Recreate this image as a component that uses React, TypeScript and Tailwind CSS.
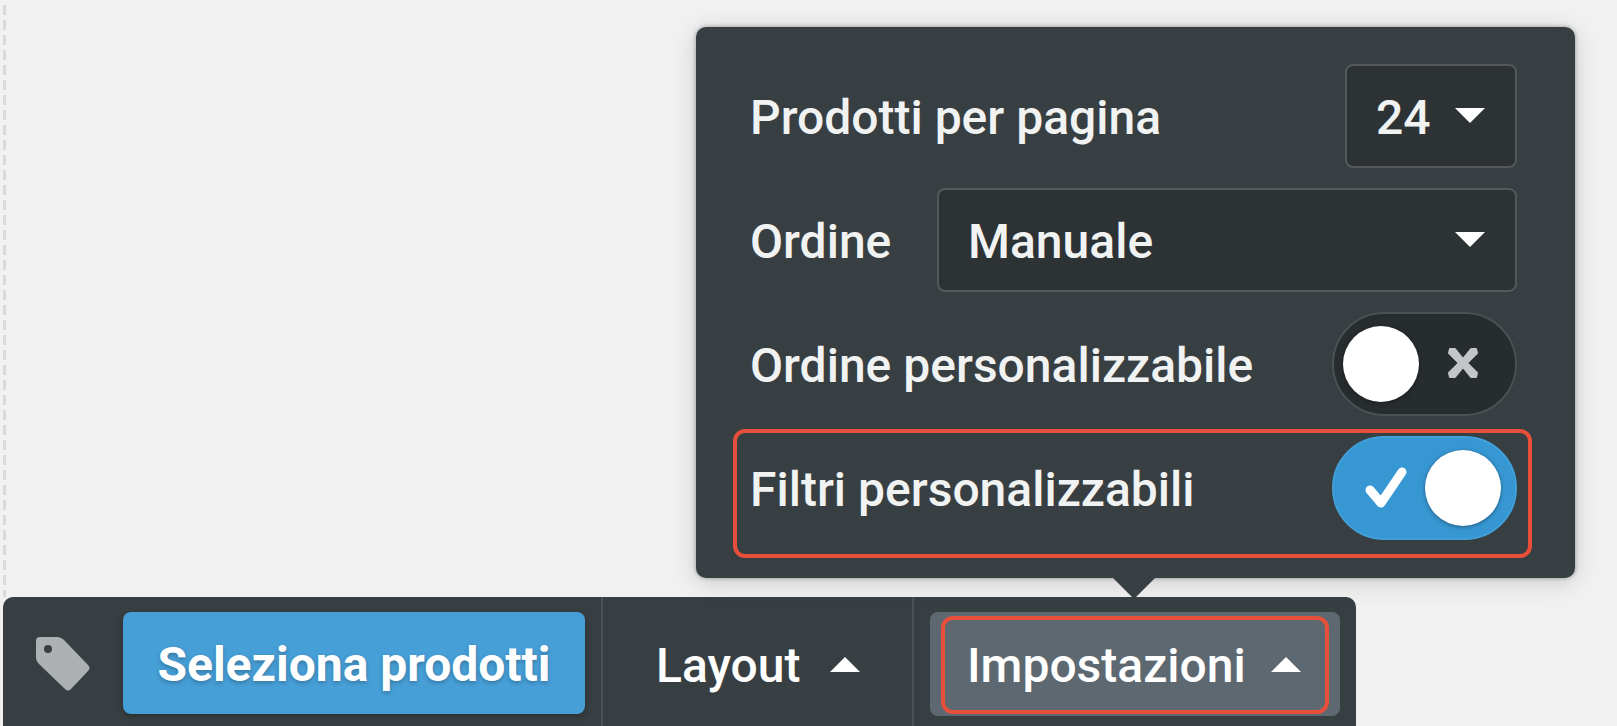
import { useState } from "react";

function Caret({ up = false }: { up?: boolean }) {
  return (
    <svg width="30" height="15" viewBox="0 0 30 15" fill="white" aria-hidden="true">
      <path d={up ? "M0 15L15 0L30 15Z" : "M0 0H30L15 15Z"} />
    </svg>
  );
}

type ToggleProps = {
  id: string;
  checked: boolean;
  onChange: (value: boolean) => void;
};

function Toggle({ id, checked, onChange }: ToggleProps) {
  return (
    <span className="relative block h-[104px] w-[185px] shrink-0">
      <input
        id={id}
        type="checkbox"
        className="peer block h-full w-full cursor-pointer appearance-none rounded-full border-2 border-[#4b5053] bg-[#272c2f] checked:border-[#419fd9] checked:bg-[#3797d3]"
        checked={checked}
        onChange={(e) => onChange(e.target.checked)}
      />
      <span className="pointer-events-none absolute top-[14px] left-[11px] size-[76px] rounded-full bg-white shadow-[0_1px_4px_rgba(0,0,0,0.4)] peer-checked:left-[93px]" />
      {checked ? (
        <svg
          className="pointer-events-none absolute top-[30px] left-[33px]"
          width="42"
          height="44"
          viewBox="0 0 42 44"
          fill="none"
          stroke="white"
          strokeLinecap="round"
          strokeLinejoin="round"
          aria-hidden="true"
        >
          <path d="M5 24L16 37L37 6" strokeWidth="9" />
        </svg>
      ) : (
        <svg
          className="pointer-events-none absolute top-[36px] left-[116px]"
          width="30"
          height="30"
          viewBox="0 0 30 30"
          fill="#c3c5c6"
          stroke="#c3c5c6"
          strokeWidth="2"
          strokeLinejoin="round"
          aria-hidden="true"
        >
          <path d="M2 1H7L15 11L23 1H28L29 5L19 15L29 25L28 29H23L15 19L7 29H2L1 25L11 15L1 5Z" />
        </svg>
      )}
    </span>
  );
}

export default function App() {
  const [perPage, setPerPage] = useState("24");
  const [order, setOrder] = useState("manuale");
  const [customOrder, setCustomOrder] = useState(false);
  const [customFilters, setCustomFilters] = useState(true);

  return (
    <main className="flex min-h-screen flex-col bg-[#f1f1f1] font-['Roboto','Liberation_Sans',sans-serif] text-5xl leading-[56px] text-white">
      {/* CANVAS */}
      <div className="flex">
        {/* dashed edge of the drop area */}
        <div className="ml-[3px] w-[3px] bg-[repeating-linear-gradient(to_bottom,#f1f1f1_0px,#f1f1f1_5px,#dadada_5px,#dadada_15px)]" />

        <div className="flex flex-1 justify-end pt-[27px] pr-[42px] pb-[19px]">
          {/* SETTINGS POPOVER */}
          <section className="relative flex w-[879px] flex-col gap-5 rounded-[10px] bg-[#383f42] pt-[37px] pr-[58px] pb-[38px] pl-[54px] font-medium text-[#f1f2f2] shadow-[0_4px_24px_rgba(0,0,0,0.16),0_0_4px_rgba(0,0,0,0.35)]">
            <div className="flex items-center justify-between">
              <label htmlFor="per-page" className="pt-1">
                Prodotti per pagina
              </label>
              <div className="relative">
                <select
                  id="per-page"
                  className="block h-[104px] w-[172px] appearance-none rounded-[8px] border-2 border-[#54585b] bg-[#2d3235] pt-1 pl-[29px]"
                  value={perPage}
                  onChange={(e) => setPerPage(e.target.value)}
                >
                  <option>24</option>
                  <option>48</option>
                </select>
                <span className="pointer-events-none absolute top-[44px] right-8">
                  <Caret />
                </span>
              </div>
            </div>

            <div className="flex items-center justify-between">
              <label htmlFor="order" className="pt-1">
                Ordine
              </label>
              <div className="relative">
                <select
                  id="order"
                  className="block h-[104px] w-[580px] appearance-none rounded-[8px] border-2 border-[#54585b] bg-[#2d3235] pt-1 pl-[29px]"
                  value={order}
                  onChange={(e) => setOrder(e.target.value)}
                >
                  <option value="manuale">Manuale</option>
                </select>
                <span className="pointer-events-none absolute top-[44px] right-8">
                  <Caret />
                </span>
              </div>
            </div>

            <div className="flex items-center justify-between">
              <label htmlFor="custom-order" className="pt-1">
                Ordine personalizzabile
              </label>
              <Toggle id="custom-order" checked={customOrder} onChange={setCustomOrder} />
            </div>

            <div className="relative flex items-center justify-between">
              <label htmlFor="custom-filters" className="pt-1">
                Filtri personalizzabili
              </label>
              <Toggle id="custom-filters" checked={customFilters} onChange={setCustomFilters} />
              <span className="pointer-events-none absolute -top-[7px] -right-[15px] -bottom-[18px] -left-[17px] rounded-[12px] border-4 border-[#e74f3b]" />
            </div>

            {/* arrow */}
            <svg
              className="absolute top-full left-[417px]"
              width="42"
              height="21"
              viewBox="0 0 42 21"
              fill="#383f42"
              aria-hidden="true"
            >
              <path d="M0 0H42L21 21Z" />
            </svg>
          </section>
        </div>
      </div>

      {/* TOOLBAR */}
      <nav className="ml-[3px] flex w-fit flex-1 rounded-t-[10px] bg-[#383f42] font-medium">
        <div className="flex items-start gap-[33px] border-r-2 border-[#4b5154] pt-[15px] pr-4 pl-[33px]">
          <svg className="mt-[25px]" width="54" height="54" viewBox="0 0 54 54" aria-hidden="true">
            <path
              d="M4 0H21Q25 0 28 3L52 28Q55 31 52 34L35 52Q32 55 29 52L3 27Q0 24 0 21V4Q0 0 4 0ZM12 8A4 4 0 1 0 12 16A4 4 0 1 0 12 8Z"
              fill="#adb1b4"
              fillRule="evenodd"
            />
          </svg>
          <button
            type="button"
            className="h-[102px] w-[462px] rounded-[8px] bg-[#479fd7] pt-1 font-bold text-shadow-[0_2px_4px_rgba(0,0,0,0.25)] shadow-[0_2px_6px_rgba(0,0,0,0.3)]"
          >
            Seleziona prodotti
          </button>
        </div>

        <div className="flex items-start border-r-2 border-[#4b5154] px-4 pt-[15px]">
          <button type="button" className="flex h-[104px] w-[277px] items-center justify-between pr-[36px] pl-[37px]">
            <span className="pt-1">Layout</span>
            <Caret up />
          </button>
        </div>

        <div className="flex items-start px-4 pt-[15px]">
          <button
            type="button"
            className="relative flex h-[104px] w-[410px] items-center justify-between rounded-[8px] bg-[#5d6870] pr-[39px] pl-[37px]"
          >
            <span className="pt-1">Impostazioni</span>
            <Caret up />
            <span className="pointer-events-none absolute top-1 right-[11px] bottom-[2px] left-[11px] rounded-[12px] border-4 border-[#e74f3b]" />
          </button>
        </div>
      </nav>
    </main>
  );
}
